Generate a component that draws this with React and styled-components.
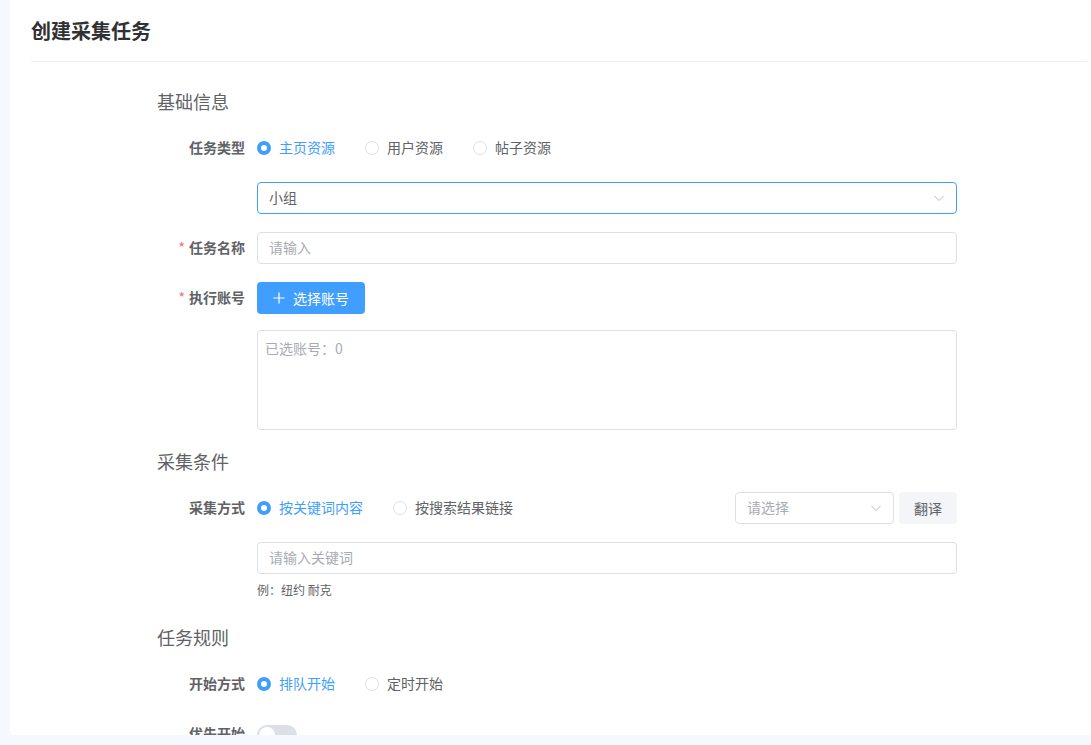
import React from "react";
import styled, { createGlobalStyle } from "styled-components";

const GlobalStyle = createGlobalStyle`
  html, body {
    margin: 0;
    padding: 0;
    background: #f5f9fd;
    overflow: hidden;
  }
  body {
    font-family: "Noto Sans CJK SC", "Liberation Sans", sans-serif;
    color: #606266;
  }
`;

const Page = styled.div`
  padding-left: 10px;
  height: 745px;
`;

const Card = styled.div`
  width: 1098px;
  height: 735px;
  box-sizing: border-box;
  background: #fff;
  border-radius: 4px;
  padding: 0 21px;
  overflow: hidden;
`;

const Header = styled.div`
  padding: 17px 0 16px;
  border-bottom: 1px solid #ebeef5;
`;

const Title = styled.h2`
  margin: 0;
  font-size: 20px;
  line-height: 28px;
  font-weight: 700;
  color: #303133;
`;

const Form = styled.div`
  padding-left: 126px;
`;

const SectionTitle = styled.div`
  font-size: 18px;
  line-height: 26px;
  color: #606266;
  margin: ${(p) => p.top}px 0 ${(p) => p.bottom || 18}px;
`;

const Row = styled.div`
  display: flex;
  align-items: flex-start;
  margin-bottom: ${(p) => (p.gap !== undefined ? p.gap : 18)}px;
`;

const Label = styled.label`
  width: 100px;
  flex-shrink: 0;
  box-sizing: border-box;
  padding-right: 12px;
  text-align: right;
  font-size: 14px;
  line-height: 30px;
  padding-bottom: 2px;
  font-weight: 700;
  color: #606266;
  &::before {
    content: ${(p) => (p.required ? '"*"' : "none")};
    color: #f56c6c;
    margin-right: 4px;
    font-weight: 400;
  }
`;

const Content = styled.div`
  width: 700px;
  display: flex;
  align-items: center;
  min-height: 32px;
  flex-wrap: wrap;
`;

const RadioGroup = styled.div`
  display: flex;
  align-items: center;
  height: 32px;
  flex: 1;
`;

const Radio = styled.span`
  display: inline-flex;
  align-items: center;
  margin-right: 30px;
  font-size: 14px;
  line-height: 18px;
  padding-bottom: 2px;
  color: ${(p) => (p.checked ? "#409eff" : "#606266")};
  &::before {
    content: "";
    width: 14px;
    height: 14px;
    box-sizing: border-box;
    border-radius: 50%;
    border: ${(p) => (p.checked ? "4px solid #409eff" : "1px solid #dcdfe6")};
    background: #fff;
    margin-right: 8px;
    margin-top: 2px;
  }
`;

const Input = styled.div`
  width: ${(p) => p.width || "700px"};
  height: 32px;
  box-sizing: border-box;
  border: 1px solid ${(p) => (p.focused ? "#409eff" : "#dcdfe6")};
  border-radius: 4px;
  padding: 0 11px 2px;
  display: flex;
  align-items: center;
  justify-content: space-between;
  font-size: 14px;
  line-height: 28px;
  color: ${(p) => (p.placeholder ? "#a8abb2" : "#606266")};
`;

const Chevron = () => (
  <svg width="12" height="12" viewBox="0 0 12 12" style={{ marginTop: 2 }}>
    <polyline points="1.5,4 6,8.5 10.5,4" fill="none" stroke="#b8bcc4" strokeWidth="1" />
  </svg>
);

const PrimaryButton = styled.button`
  height: 32px;
  padding: 0 16px 1px;
  border: none;
  border-radius: 4px;
  background: #409eff;
  color: #fff;
  font-family: inherit;
  font-size: 14px;
  display: inline-flex;
  align-items: center;
  gap: 8px;
`;

const PlainButton = styled.button`
  height: 32px;
  padding: 0 15px 1px;
  margin-left: 5px;
  border: none;
  border-radius: 4px;
  background: #f4f5f8;
  color: #606266;
  font-family: inherit;
  font-size: 14px;
`;

const AccountBox = styled.div`
  width: 700px;
  height: 100px;
  box-sizing: border-box;
  border: 1px solid #dcdfe6;
  border-radius: 4px;
  padding: 7px 7px;
  font-size: 14px;
  line-height: 20px;
  color: #a8abb2;
`;

const Hint = styled.div`
  margin-top: 6px;
  font-size: 12px;
  line-height: 20px;
  color: #606266;
`;

const Switch = styled.span`
  display: inline-block;
  position: relative;
  width: 40px;
  height: 20px;
  border-radius: 10px;
  background: #dcdfe6;
  margin-top: 2px;
  &::after {
    content: "";
    position: absolute;
    left: 2px;
    top: 2px;
    width: 16px;
    height: 16px;
    border-radius: 50%;
    background: #fff;
  }
`;

const Plus = () => (
  <svg width="12" height="12" viewBox="0 0 12 12">
    <path d="M6 0.5V11.5M0.5 6H11.5" stroke="#fff" strokeWidth="1.2" />
  </svg>
);

export default function App() {
  return (
    <Page>
      <GlobalStyle />
      <Card>
        <Header>
          <Title>创建采集任务</Title>
        </Header>
        <Form>
          <SectionTitle top={26}>基础信息</SectionTitle>
          <Row>
            <Label>任务类型</Label>
            <Content>
              <RadioGroup>
                <Radio checked>主页资源</Radio>
                <Radio>用户资源</Radio>
                <Radio>帖子资源</Radio>
              </RadioGroup>
            </Content>
          </Row>
          <Row>
            <Label />
            <Content>
              <Input focused>
                小组
                <Chevron />
              </Input>
            </Content>
          </Row>
          <Row>
            <Label required>任务名称</Label>
            <Content>
              <Input placeholder="1">请输入</Input>
            </Content>
          </Row>
          <Row gap={16}>
            <Label required>执行账号</Label>
            <Content>
              <PrimaryButton>
                <Plus />
                选择账号
              </PrimaryButton>
            </Content>
          </Row>
          <Row gap={0}>
            <Label />
            <Content>
              <AccountBox>已选账号：0</AccountBox>
            </Content>
          </Row>

          <SectionTitle top={18} bottom={18}>采集条件</SectionTitle>
          <Row>
            <Label>采集方式</Label>
            <Content>
              <RadioGroup>
                <Radio checked>按关键词内容</Radio>
                <Radio>按搜索结果链接</Radio>
              </RadioGroup>
              <Input width="159px" placeholder="1">
                请选择
                <Chevron />
              </Input>
              <PlainButton>翻译</PlainButton>
            </Content>
          </Row>
          <Row gap={0}>
            <Label />
            <Content>
              <Input placeholder="1">请输入关键词</Input>
              <Hint>例：纽约 耐克</Hint>
            </Content>
          </Row>

          <SectionTitle top={24} bottom={18}>任务规则</SectionTitle>
          <Row>
            <Label>开始方式</Label>
            <Content>
              <RadioGroup>
                <Radio checked>排队开始</Radio>
                <Radio>定时开始</Radio>
              </RadioGroup>
            </Content>
          </Row>
          <Row>
            <Label>优先开始</Label>
            <Content>
              <Switch />
            </Content>
          </Row>
        </Form>
      </Card>
    </Page>
  );
}
